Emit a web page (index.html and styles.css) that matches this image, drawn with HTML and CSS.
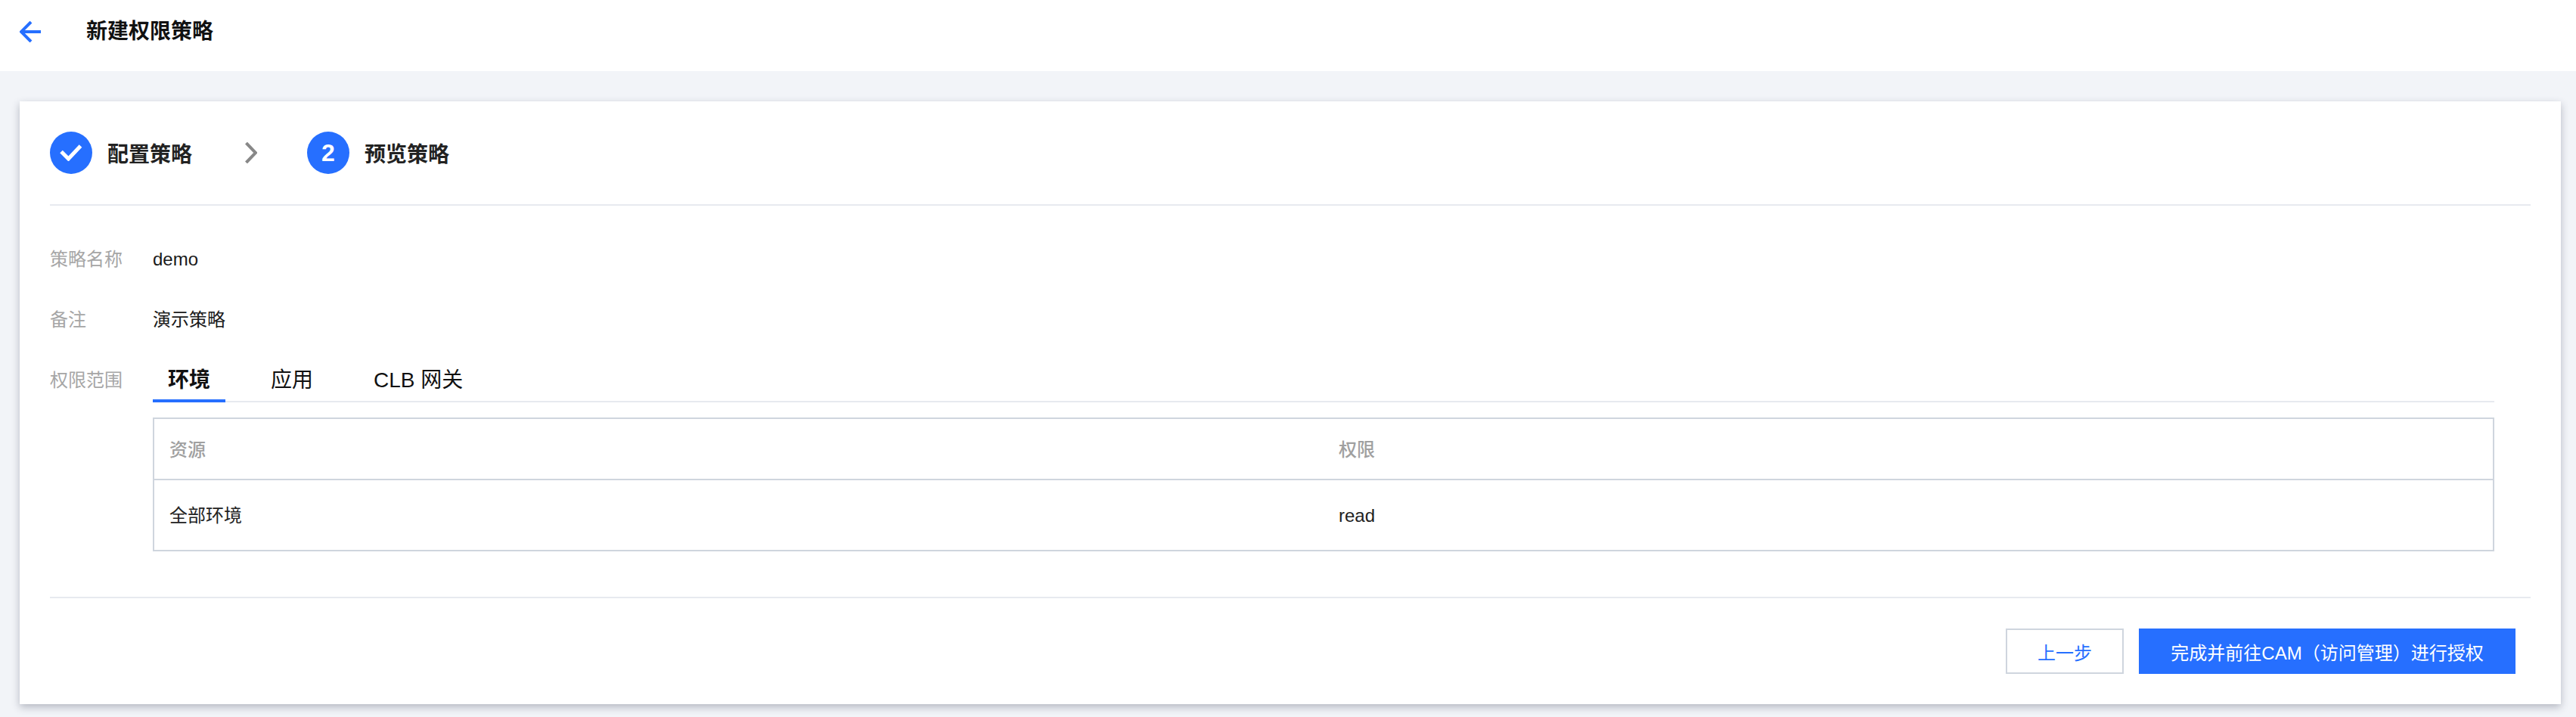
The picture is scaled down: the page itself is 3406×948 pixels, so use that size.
FILE: index.html
```html
<!DOCTYPE html>
<html lang="zh-CN">
<head>
<meta charset="utf-8">
<title>新建权限策略</title>
<link rel="stylesheet" href="styles.css">
</head>
<body>
<header class="topbar">
  <svg class="back" width="28" height="28" viewBox="0 0 28 28" fill="none"><path d="M15 1 2 14l13 13M2 14h26" stroke="#266fff" stroke-width="4"/></svg>
  <h1 class="title">新建权限策略</h1>
</header>
<main class="page">
  <section class="card">
    <div class="steps">
      <div class="step">
        <span class="badge"><svg width="30" height="22" viewBox="0 0 30 22" fill="none"><path d="M2 9.500 11.500 19 27.500 2" stroke="#fff" stroke-width="5"/></svg></span>
        <span class="step-name">配置策略</span>
      </div>
      <svg class="chev" width="16" height="28" viewBox="0 0 16 28" fill="none"><path d="M1.500 1 14 14 1.500 27" stroke="#888" stroke-width="4"/></svg>
      <div class="step">
        <span class="badge">2</span>
        <span class="step-name">预览策略</span>
      </div>
    </div>
    <div class="form">
      <div class="row"><div class="label">策略名称</div><div class="value">demo</div></div>
      <div class="row"><div class="label">备注</div><div class="value">演示策略</div></div>
      <div class="row scope">
        <div class="label">权限范围</div>
        <div class="scope-body">
          <nav class="tabs">
            <span class="tab active">环境</span>
            <span class="tab">应用</span>
            <span class="tab">CLB 网关</span>
          </nav>
          <div class="table-wrap">
            <table class="grid">
              <thead><tr><th>资源</th><th>权限</th></tr></thead>
              <tbody><tr><td>全部环境</td><td>read</td></tr></tbody>
            </table>
          </div>
        </div>
      </div>
    </div>
    <footer class="actions">
      <button class="btn">上一步</button>
      <button class="btn primary">完成并前往CAM（访问管理）进行授权</button>
    </footer>
  </section>
</main>
</body>
</html>
```
FILE: styles.css
```css
* { box-sizing: border-box; }
html, body { margin: 0; height: 100%; }
body {
  background: #f2f4f8;
  color: #1a1a1a;
  font-family: "Liberation Sans", "Noto Sans CJK SC", sans-serif;
  font-size: 24px;
  overflow: hidden;
}
.topbar {
  height: 94px;
  background: #fff;
  display: flex;
  align-items: center;
  padding: 0 0 10px 26px;
}
.back { flex: none; }
.title {
  margin: 0 0 0 60px;
  font-size: 28px;
  line-height: 40px;
  font-weight: 700;
  color: #111;
}
.page { padding: 40px 20px 17px 26px; }
.card {
  background: #fff;
  height: 797px;
  padding: 0 40px;
  box-shadow: 0 4px 10px rgba(54, 58, 80, .32);
}
.steps {
  display: flex;
  align-items: center;
  height: 138px;
  padding-top: 40px;
  padding-bottom: 40px;
  border-bottom: 2px solid #e7eaef;
}
.step { display: flex; align-items: center; }
.badge {
  width: 56px;
  height: 56px;
  border-radius: 50%;
  background: #266fff;
  color: #fff;
  font-size: 32px;
  font-weight: 700;
  display: flex;
  align-items: center;
  justify-content: center;
}
.step-name {
  margin-left: 20px;
  font-size: 28px;
  font-weight: 700;
  color: #222;
}
.chev { margin: 0 66px 0 70px; flex: none; }
.form { padding-top: 51px; height: 519px; border-bottom: 2px solid #e7eaef; }
.row { display: flex; line-height: 40px; margin-bottom: 40px; }
.row.scope { margin-bottom: 0; }
.label { width: 136px; flex: none; color: #a6a6a6; }
.value { color: #1a1a1a; }
.scope-body { width: 3096px; flex: none; }
.tabs {
  display: flex;
  height: 49px;
  border-bottom: 2px solid #e7eaef;
  font-size: 28px;
  color: #111;
}
.tab {
  height: 49px;
  padding: 0 20px;
  margin-right: 40px;
  line-height: 40px;
}
.tab.active {
  font-weight: 700;
  border-bottom: 4px solid #266fff;
}
.table-wrap { margin-top: 20px; border: 2px solid #cfd5de; }
.grid {
  width: 100%;
  table-layout: fixed;
  border-collapse: separate;
  border-spacing: 0;
}
.grid th, .grid td { padding: 0 20px; text-align: left; }
.grid th {
  height: 81px;
  padding-top: 3px;
  font-weight: 500;
  color: #a0a0a0;
  border-bottom: 2px solid #cfd5de;
}
.grid td { height: 92px; padding-top: 2px; color: #222; }
.actions {
  display: flex;
  justify-content: flex-end;
  gap: 20px;
  padding: 40px 20px;
}
.btn {
  height: 60px;
  padding: 0;
  width: 156px;
  font: inherit;
  background: #fff;
  color: #266fff;
  border: 2px solid #cfd5de;
}
.btn.primary {
  width: 498px;
  background: #266fff;
  border-color: #266fff;
  color: #fff;
}
```
